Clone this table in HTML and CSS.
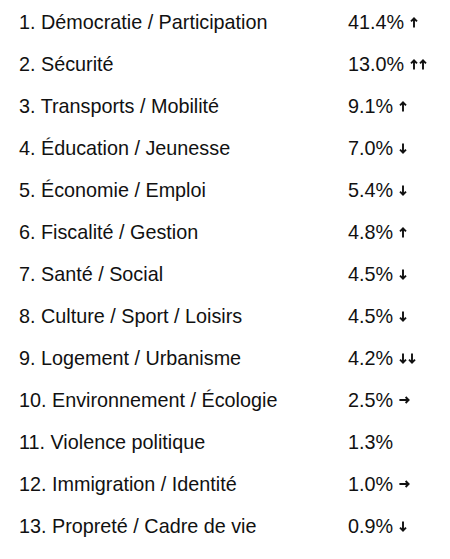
FILE: index.html
```html
<!DOCTYPE html>
<html lang="fr">
<head>
<meta charset="utf-8">
<link rel="stylesheet" href="styles.css">
</head>
<body>
<svg width="0" height="0" class="defs">
  <defs>
    <symbol id="up" viewBox="0 0 8 11"><path d="M4 10.6V1.4M1 4.4L4 1.4L7 4.4" fill="none" stroke="currentColor" stroke-width="1.9"/></symbol>
    <symbol id="down" viewBox="0 0 8 11"><path d="M4 0.4V9.6M1 6.6L4 9.6L7 6.6" fill="none" stroke="currentColor" stroke-width="1.9"/></symbol>
    <symbol id="right" viewBox="0 0 11 8"><path d="M0.4 4H9.6M6.6 1L9.6 4L6.6 7" fill="none" stroke="currentColor" stroke-width="1.9"/></symbol>
  </defs>
</svg>
<ul class="list">
  <li class="row"><span class="label">1. Démocratie / Participation</span><span class="val">41.4%<svg class="ar v"><use href="#up"/></svg></span></li>
  <li class="row"><span class="label">2. Sécurité</span><span class="val">13.0%<svg class="ar v"><use href="#up"/></svg><svg class="ar v"><use href="#up"/></svg></span></li>
  <li class="row"><span class="label">3. Transports / Mobilité</span><span class="val">9.1%<svg class="ar v"><use href="#up"/></svg></span></li>
  <li class="row"><span class="label">4. Éducation / Jeunesse</span><span class="val">7.0%<svg class="ar v"><use href="#down"/></svg></span></li>
  <li class="row"><span class="label">5. Économie / Emploi</span><span class="val">5.4%<svg class="ar v"><use href="#down"/></svg></span></li>
  <li class="row"><span class="label">6. Fiscalité / Gestion</span><span class="val">4.8%<svg class="ar v"><use href="#up"/></svg></span></li>
  <li class="row"><span class="label">7. Santé / Social</span><span class="val">4.5%<svg class="ar v"><use href="#down"/></svg></span></li>
  <li class="row"><span class="label">8. Culture / Sport / Loisirs</span><span class="val">4.5%<svg class="ar v"><use href="#down"/></svg></span></li>
  <li class="row"><span class="label">9. Logement / Urbanisme</span><span class="val">4.2%<svg class="ar v"><use href="#down"/></svg><svg class="ar v"><use href="#down"/></svg></span></li>
  <li class="row"><span class="label">10. Environnement / Écologie</span><span class="val">2.5%<svg class="ar h"><use href="#right"/></svg></span></li>
  <li class="row"><span class="label">11. Violence politique</span><span class="val">1.3%</span></li>
  <li class="row"><span class="label">12. Immigration / Identité</span><span class="val">1.0%<svg class="ar h"><use href="#right"/></svg></span></li>
  <li class="row"><span class="label">13. Propreté / Cadre de vie</span><span class="val">0.9%<svg class="ar v"><use href="#down"/></svg></span></li>
</ul>
</body>
</html>
```
FILE: styles.css
```css
html, body {
  margin: 0;
  padding: 0;
  background: #fff;
}
body {
  font-family: "Liberation Sans", Arial, sans-serif;
  font-size: 19.8px;
  color: #111;
}
.defs {
  position: absolute;
  width: 0;
  height: 0;
}
.list {
  list-style: none;
  margin: 0;
  padding: 1px 0 0 19px;
}
.row {
  display: grid;
  grid-template-columns: 329px 1fr;
  height: 42px;
  align-items: center;
}
.val {
  display: flex;
  align-items: center;
  gap: 1px;
}
.ar {
  color: #111;
  flex: none;
}
.ar.v {
  width: 8px;
  height: 11px;
}
.ar.h {
  width: 11px;
  height: 8px;
}
.val .ar:first-of-type {
  margin-left: 5px;
}
```
